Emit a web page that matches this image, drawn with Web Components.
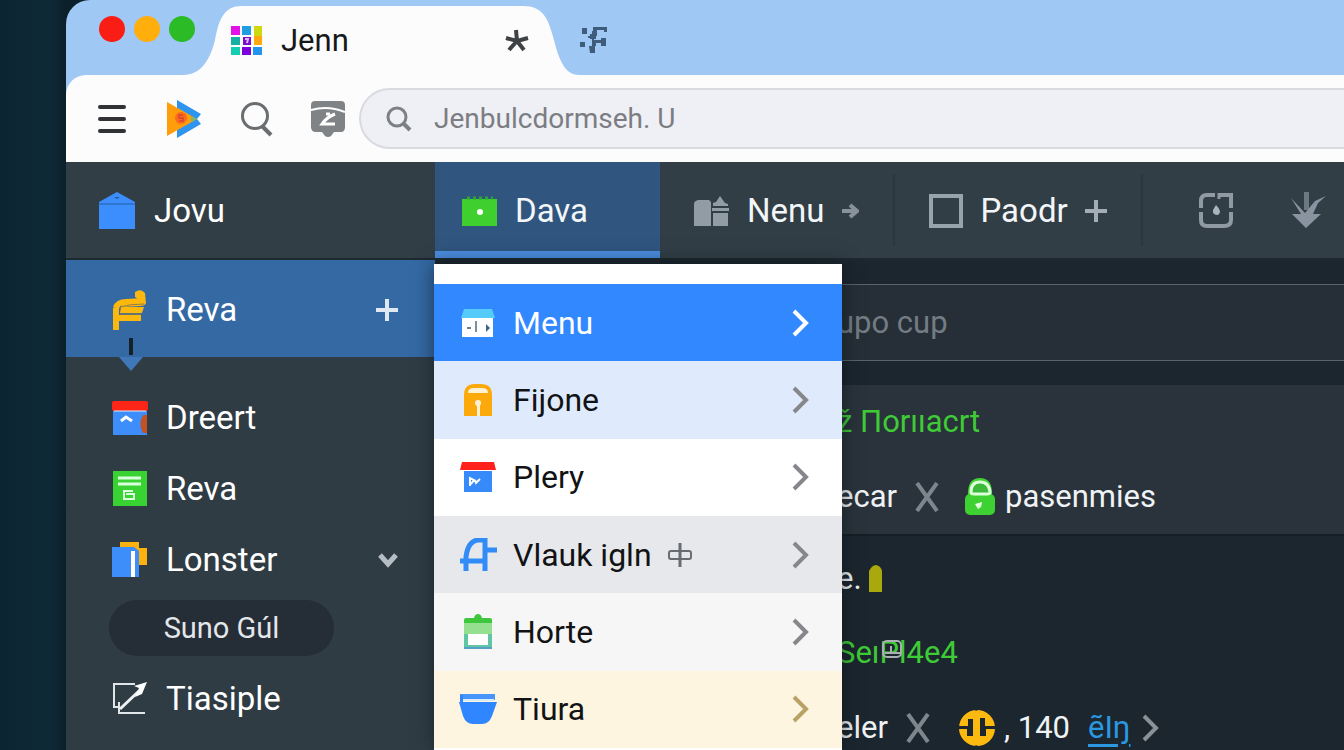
<!DOCTYPE html>
<html lang="en">
<head>
<meta charset="utf-8">
<meta name="viewport" content="width=device-width, initial-scale=1">
<title>Jenn</title>
<style>
body {
    margin: 0;
    overflow: hidden;
    background: linear-gradient(90deg, #0b2531 0, #0e2a36 50px, #0b202b 66px);
    font: 32px/40px Roboto, "Open Sans", sans-serif;
    color: #fff;
}
</style>
</head>
<body>
<browser-window>
    <browser-tab slot="tabs" icon="grid">Jenn</browser-tab>
    <browser-toolbar slot="toolbar"></browser-toolbar>
    <app-layout>
        <app-brand slot="brand">Jovu</app-brand>
        <nav-tab slot="nav" icon="calendar" active>Dava</nav-tab>
        <nav-tab slot="nav" icon="building" extra="arrow">Nenu</nav-tab>
        <nav-tab slot="nav" icon="square" extra="plus">Paodr</nav-tab>
        <nav-action slot="nav" icon="capture" label="Capture"></nav-action>
        <nav-action slot="nav" icon="leaf" label="Download"></nav-action>

        <side-item slot="side" icon="wing" extra="plus" active>Reva</side-item>
        <side-item slot="side" icon="shop">Dreert</side-item>
        <side-item slot="side" icon="note">Reva</side-item>
        <side-item slot="side" icon="folder" extra="down">Lonster</side-item>
        <side-pill slot="side">Suno Gúl</side-pill>
        <side-item slot="side" icon="export">Tiasiple</side-item>

        <popup-menu slot="menu">
            <menu-item icon="store" tone="primary">Menu</menu-item>
            <menu-item icon="gate" tone="light">Fijone</menu-item>
            <menu-item icon="stall">Plery</menu-item>
            <menu-item icon="bridge" tone="grey" extra="join">Vlauk igln</menu-item>
            <menu-item icon="jar" tone="pale">Horte</menu-item>
            <menu-item icon="bowl" tone="cream">Tiura</menu-item>
        </popup-menu>

        <content-search placeholder="upo cup"></content-search>
        <content-panel raised>
            <content-row tone="green">ž &#1055;orııacrt</content-row>
            <content-row>ecar<app-icon name="cross"></app-icon><app-icon name="lock"></app-icon><span>pasenmies</span></content-row>
        </content-panel>
        <content-panel>
            <content-row tight>e.<app-icon name="bullet"></app-icon></content-row>
            <content-row tone="green" badge="chip">SeıPl4e4</content-row>
            <content-row>eler<app-icon name="cross"></app-icon><app-icon name="coin"></app-icon><span>, 140</span><content-link>ẽIŋ</content-link></content-row>
        </content-panel>
    </app-layout>
</browser-window>

<script>
"use strict"
{
    /* width, height, markup */
    const icons = {
        grid: [32, 32, `
            <path fill="#e310e8" d="M0 1h9v9H0z"/><path fill="#1f9fe0" d="M11 1h9v9h-9z"/><path fill="#cfd90f" d="M23 1h8v10h-8z"/>
            <path fill="#15b0a4" d="M0 12h9v8H0z"/><path fill="#7b0fc9" d="M12 12h8v8h-8z"/><path fill="#ffa90f" d="M23 11h8v9h-8z"/>
            <path fill="#13cdb0" d="M0 22h9v8H0z"/><path fill="#7a00dc" d="M11 22h9v8h-9z"/><path fill="#2395ee" d="M22 22h9v8h-9z"/>
            <path fill="none" stroke="#dcb7f4" stroke-width="2" d="M14 14h3l-1 4"/>`],
        star: [24, 24, `<path fill="none" stroke="#3f4245" stroke-width="4" d="M11 1l1 11L1 9m11 3L4 21m8-9 7 9m-7-9 11-3"/>`],
        pixels: [28, 28, `<path fill="#3f5c7a" d="M3 2h5v6H3zM1 16h5v5H1zM14 1h14v5h-3V4h-7v6h-4zM11 8h6v5h-6zM13 14h9v-2h5v8h-5v-3h-5v3h-4zM10 20h6v7h-5z"/><path stroke="#3f5c7a" stroke-width="2" d="M9 11h8M14 5v16"/>`],
        burger: [28, 30, `<path stroke="#303236" stroke-width="4" stroke-linecap="round" d="M2 3h24M2 15h24M2 27h24"/>`],
        play: [36, 40, `<path fill="#2f94ee" d="M11 1l24 14-4 5 4 5-24 14z"/><path fill="#ff9d0b" d="M1 3l30 17L1 37z"/><path fill="#79b96d" d="M25 17l6 3-6 3z"/><circle cx="15" cy="19" r="6" fill="#ff6a1c"/><path fill="none" stroke="#d9502e" stroke-width="2" d="M17 16h-4v3h4v3h-4"/>`],
        search: [34, 36, `<circle cx="16" cy="15" r="12.5" fill="none" stroke="#6b6e71" stroke-width="3"/><path stroke="#6b6e71" stroke-width="4" d="M23 25l9 9"/>`],
        note2: [34, 36, `<path fill="#808386" d="M4 0h26q4 0 4 4v22q0 5-4 5h-7l-3 4q-3 2-6 0l-3-4H5q-5 0-5-5V4q0-4 4-4z"/><path fill="none" stroke="#fff" stroke-width="2" d="M0 9q17-5 34 2"/><path fill="none" stroke="#fff" stroke-width="3" d="M24 13q-8 3-13 10h13M15 13h4"/>`],
        find: [26, 26, `<circle cx="11" cy="11" r="9" fill="none" stroke="#7d8085" stroke-width="3"/><path stroke="#7d8085" stroke-width="4" d="M17 17l7 7"/>`],
        home: [38, 38, `<path fill="#3c8eff" d="M1 10L19 0l18 10v27H1z"/><path stroke="#245c9f" stroke-width="1" d="M1 12h36"/><path fill="#245c9f" d="M16 5h6l-3 2z"/>`],
        calendar: [36, 32, `<path fill="#3fd02f" d="M0 4h35v27H0z"/><path stroke="#2da438" stroke-width="3" stroke-dasharray="3 3" d="M5 3h26"/><circle cx="18" cy="17" r="3" fill="#fff"/>`],
        building: [36, 32, `<path fill="#919ca5" d="M4 5h11l2 2v24H0V9q0-3 4-4zM19 31V18h15v13zM18 16v-3h17v3zM19 11V8l3-1 4-6 5 7 3 1v2z"/>`],
        square: [34, 34, `<path fill="none" stroke="#97a3ad" stroke-width="4" d="M2 2h30v30H2z"/><path fill="#97a3ad" d="M28 32h6v2h-6z"/>`],
        capture: [34, 36, `<path fill="none" stroke="#8f9aa3" stroke-width="4" d="M2 16V9q0-6 6-6h8M19 3h13v13M2 20v8q0 6 6 6h17q7 0 7-6v-8"/><path fill="#a9b4bb" d="M17 13q7 7 2 10-6 0-5-5z"/><path stroke="#8f9aa3" stroke-width="3" d="M20 1v6"/>`],
        leaf: [38, 36, `<path fill="#6d7881" d="M15 0h5v18h-5z"/><path fill="#8994a0" d="M2 6l14 15L26 9l11-5-8 7-5 11h8L17 36 3 22h9z"/>`],
        arrow: [18, 16, `<path fill="none" stroke="#87929b" stroke-width="4" d="M1 8h14M9 2l7 6-7 6"/>`],
        plus: [22, 22, `<path stroke="currentColor" stroke-width="4" d="M0 11h22M11 0v22"/>`],
        down: [20, 16, `<path fill="none" stroke="#b5bec5" stroke-width="5" d="M2 3l8 9 8-9"/>`],
        wing: [38, 42, `<path fill="#fdb80e" d="M24 3q6-4 10 1l1 10q-1 3-6 3l-19 1 1-2q9 0 16-2l3-2-6-4zM2 18q3-8 13-8l19-1-2 6-19 1q-5 0-5 5zM10 18h23l-2 6H9zM8 26h22v6H8v9H2V19h6z"/><path fill="none" stroke="#8f8047" stroke-width="1" d="M9 18q10-3 24-3M9 25h21"/>`],
        shop: [36, 36, `<path fill="#3d8dfa" d="M1 9h34v26H1z"/><path fill="#c25223" d="M35 15v18h-4q-5-9 0-18z"/><rect width="36" height="10" y="1" rx="2" fill="#fb2518"/><path stroke="#e7edf7" stroke-width="1" d="M2 11h32"/><path fill="none" stroke="#fff" stroke-width="3" d="M9 21l5-4 6 4"/>`],
        note: [34, 36, `<path fill="#39d233" d="M0 0h34v35H0z"/><path stroke="#d9ffdc" stroke-width="3" d="M5 7h23M5 13h23"/><path fill="none" stroke="#d9ffdc" stroke-width="2" d="M20 20h-9v8h10v-5H13"/>`],
        folder: [36, 36, `<path fill="#fbb20e" d="M8 0h19v6h8v17h-8l-19-16z"/><path fill="#3d8dfa" d="M0 5h22l5 4v26H0z"/><path fill="#fff" d="M19 9h4v26h-4z"/>`],
        export: [36, 34, `<path fill="none" stroke="#dfe6ea" stroke-width="2" d="M23 2H2v23h5M7 20v11h26"/><path stroke="#eef2f4" stroke-width="3" d="M8 27L27 9"/><path fill="#fff" d="M35 0L22 4l5 2-4 9 7-3z"/>`],
        pointer: [24, 34, `<path stroke="#14202a" stroke-width="4" d="M12 0v17"/><path fill="#3f78b8" d="M0 19h24L12 33z"/>`],
        store: [34, 30, `<path fill="#fff" d="M1 9h31v20H1z"/><path fill="#54cbf8" d="M3 1h28l3 9H0z"/><path stroke="#71828f" stroke-width="2" d="M6 20h4"/><path stroke="#7790a6" stroke-width="2" d="M15 13v11"/><path fill="#3b6486" d="M25 16l4 4-4 4z"/>`],
        gate: [28, 32, `<path fill="#fca90b" d="M0 32V11Q0 0 11 0h6q11 0 11 11v21z"/><path fill="#fff1d6" d="M4 9q0-5 6-5h8q6 0 6 5zM13 19h3v13h-3z"/><circle cx="14" cy="19" r="3" fill="#fff1d6"/>`],
        stall: [36, 32, `<path fill="#368af9" d="M4 10h28v21H4z"/><path fill="#ff211b" d="M2 1h32l2 8H0z"/><path fill="none" stroke="#fff" stroke-width="2" d="M10 25v-8l4 2-3 4m4-4l1 3 4-4"/>`],
        bridge: [38, 34, `<path fill="none" stroke="#318cf8" stroke-width="5" d="M7 33V19Q9 3 19 2h7v31M1 23h27M27 12h11"/>`],
        jar: [30, 36, `<path fill="#5fc5a4" d="M1 14h28v21H1z"/><path fill="#94df90" d="M1 8h28v12H1z"/><path fill="#3ec73d" d="M3 4h8q1-4 4-4t4 4h8q2 0 2 2v3H1V6q0-2 2-2z"/><path fill="#fff" d="M5 20h20v11H5z"/><path stroke="#579fc4" stroke-width="2" d="M1 34h28"/>`],
        bowl: [38, 32, `<path fill="#4595fb" d="M1 1h35v6H1z"/><path fill="#2f86ff" d="M0 9h38l-5 14q-3 8-10 8h-9q-7 0-10-8z"/><path fill="#2f86ff" d="M1 2h3v8H1z"/><path stroke="#d8e9fa" stroke-width="2" d="M4 7h31"/>`],
        join: [24, 24, `<rect x="1" y="8" width="22" height="8" rx="2" fill="none" stroke="#696c70" stroke-width="2"/><path stroke="#696c70" stroke-width="3" d="M12 0v24"/>`],
        chevron: [18, 28, `<path fill="none" stroke="currentColor" stroke-width="4" d="M2 2l12 12L2 26"/>`],
        cross: [24, 30, `<path fill="none" stroke="#7d868d" stroke-width="4" d="M2 1l20 28M22 1L2 29"/>`],
        lock: [30, 38, `<rect y="16" width="30" height="21" rx="5" fill="#3ed132"/><path fill="#3ed132" d="M3 18Q2 0 15 0t12 18z"/><path fill="#3ab93b" stroke="#dcffd9" stroke-width="3" d="M6 14Q6 4 15 4t10 10q0 2-3 2H9q-3 0-3-2z"/><path fill="#e5ffe2" d="M10 26l7-2-1 5-3 2z"/>`],
        bullet: [14, 28, `<path fill="#a9a80c" d="M1 27V6q3-6 7-6 5 1 6 6v21z"/>`],
        chip: [20, 18, `<rect x="1" y="1" width="18" height="16" rx="4" fill="none" stroke="#a9afb3" stroke-width="2"/><path stroke="#a9afb3" stroke-width="2" d="M9 6v6M3 13h15"/>`],
        coin: [38, 38, `<circle cx="19" cy="19" r="18" fill="#fcb90f"/><path fill="#1c262e" d="M0 17h10v-7h5v17H9v-7H0zM22 9h5v8h11v3H28v7h-6zM16 0h5l-3 2zM16 38h5l-3-2z"/>`]
    };

    const define = (name, css, html, setup) => {
        const template = document.createElement('template');
        template.innerHTML = `<style>* { box-sizing: border-box; } button { font: inherit; color: inherit; border: 0; padding: 0; background: none; cursor: pointer; }${css}</style>${html}`;
        customElements.define(name, class extends HTMLElement {
            constructor() {
                super();
                this.attachShadow({ mode: 'open' }).appendChild(template.content.cloneNode(true));
            }
            connectedCallback() {
                const t = this;
                // copy icon and extra attributes to the inner icons
                t.shadowRoot.querySelectorAll('app-icon[from]').forEach(icon => {
                    const value = t.getAttribute(icon.getAttribute('from'));
                    if (value) icon.setAttribute('name', value);
                    else icon.remove();
                });
                if (setup) setup(t, t.shadowRoot);
            }
        });
    };

    class AppIcon extends HTMLElement {
        static get observedAttributes() {
            return ['name'];
        }
        constructor() {
            super();
            this.attachShadow({ mode: 'open' });
        }
        attributeChangedCallback(property, oldValue, newValue) {
            const icon = icons[newValue];
            if (oldValue === newValue || !icon) return;
            this.shadowRoot.innerHTML = `<style>:host { display: inline-flex; flex: none; } svg { display: block; }</style>
<svg width="${icon[0]}" height="${icon[1]}" viewBox="0 0 ${icon[0]} ${icon[1]}" fill="none" aria-hidden="true">${icon[2]}</svg>`;
        }
    }
    customElements.define('app-icon', AppIcon);

    define('browser-window', `
:host { display: flex; flex-direction: column; height: 100vh; margin-left: 66px; overflow: hidden; border-radius: 24px 0 0 0; background: #9fc8f4; }
.strip { display: flex; height: 75px; flex: none; }
.lights { display: flex; gap: 9px; padding: 16px 0 0 33px; }
.lights button { width: 26px; height: 26px; border-radius: 50%; }
.close { background: #fa1d15; }
.min { background: #ffae0b; }
.max { background: #2abb27; }
.new { align-self: center; height: 30px; }
`, `
<div class="strip">
    <div class="lights"><button class="close" aria-label="Close"></button><button class="min" aria-label="Minimize"></button><button class="max" aria-label="Maximize"></button></div>
    <slot name="tabs"></slot>
    <button class="new" aria-label="New tab"><app-icon name="pixels"></app-icon></button>
</div>
<slot name="toolbar"></slot>
<slot></slot>`);

    define('browser-tab', `
:host { display: flex; align-items: center; gap: 18px; position: relative; width: 396px; margin: 6px 0 0 -12px; padding: 0 50px 0 48px; box-sizing: border-box; color: #17181a; font-size: 31px; }
.shape { position: absolute; inset: 0; width: 100%; height: 100%; }
app-icon, span, button { position: relative; }
span { flex: 1; }
button { display: flex; }
`, `
<svg class="shape" viewBox="0 0 396 69" preserveAspectRatio="none" aria-hidden="true"><path fill="#fcfcfd" d="M0 69C18 69 27 54 32 34C36 13 41 0 59 0H340C360 0 365 12 371 34C376 54 382 69 396 69z"/></svg>
<app-icon from="icon"></app-icon><span><slot></slot></span>
<button aria-label="Close tab"><app-icon name="star"></app-icon></button>`);

    define('browser-toolbar', `
:host { display: flex; align-items: center; flex: none; height: 87px; padding-left: 28px; border-radius: 20px 0 0 0; background: #fcfcfd; }
nav { display: flex; gap: 36px; padding-right: 13px; }
nav button { display: flex; justify-content: center; align-items: center; width: 36px; height: 40px; }
label { display: flex; flex: 1; align-items: center; gap: 22px; height: 61px; padding-left: 25px; border: 2px solid #d9dadf; border-right: 0; border-radius: 31px 0 0 31px; background: #eff0f5; }
input { flex: 1; min-width: 0; border: 0; padding: 0; outline: 0; background: none; font: inherit; font-size: 28px; color: #7b7d82; }
`, `
<nav>
    <button aria-label="Menu"><app-icon name="burger"></app-icon></button>
    <button aria-label="Play"><app-icon name="play"></app-icon></button>
    <button aria-label="Search"><app-icon name="search"></app-icon></button>
    <button aria-label="Notes"><app-icon name="note2"></app-icon></button>
</nav>
<label><app-icon name="find"></app-icon><input type="text" aria-label="Address" value="Jenbulcdormseh. U"></label>`);

    define('app-layout', `
:host { display: grid; grid-template-columns: 369px 1fr; grid-template-rows: 98px 1fr; flex: 1; min-height: 0; position: relative; background: #1c262e; }
.brand, .nav { border-bottom: 2px solid #1d2931; background: #323e46; }
.nav { display: flex; }
aside { background: #303c44; }
main { min-width: 0; padding-top: 24px; background: #1c262e; }
.menu { position: absolute; left: 368px; top: 102px; bottom: 0; display: flex; }
`, `
<div class="brand"><slot name="brand"></slot></div>
<div class="nav" role="navigation"><slot name="nav"></slot></div>
<aside><slot name="side"></slot></aside>
<main><slot></slot></main>
<div class="menu"><slot name="menu"></slot></div>`);

    define('app-brand', `
:host { display: flex; align-items: center; gap: 18px; height: 98px; padding-left: 32px; font-size: 33px; }
`, `<app-icon name="home"></app-icon><slot></slot>`);

    define('nav-tab', `
:host { display: flex; border-right: 2px solid #2b363e; margin: 12px 0; color: #f3f6f8; font-size: 33px; }
button { display: flex; align-items: center; gap: 17px; padding: 2px 34px 0; }
app-icon { color: #a3adb5; }
:host([active]) { width: 225px; box-sizing: border-box; margin: 0; border-right: 0; border-bottom: 7px solid #4b8de0; background: #30557e; }
:host([active]) button { padding: 9px 27px 0; }
`, `<button><app-icon from="icon"></app-icon><slot></slot><app-icon from="extra"></app-icon></button>`);

    define('nav-action', `
:host { display: flex; align-items: center; margin-left: 56px; }
button { display: flex; }
`, `<button><app-icon from="icon"></app-icon></button>`, (t, root) => {
        root.querySelector('button').setAttribute('aria-label', t.getAttribute('label'));
    });

    define('side-item', `
:host { display: block; position: relative; font-size: 33px; }
button { display: grid; grid-template-columns: 42px 1fr auto; align-items: center; column-gap: 15px; width: 100%; height: 71px; padding: 2px 37px 0 43px; text-align: left; }
app-icon { justify-content: center; }
:host([active]) { margin-bottom: 24px; background: #3469a4; }
:host([active]) button { height: 97px; }
.plus { color: #dfe9f4; }
.pointer { display: none; position: absolute; left: 53px; top: 78px; }
:host([active]) .pointer { display: block; }
`, `<button><app-icon from="icon"></app-icon><span><slot></slot></span><app-icon class="plus" from="extra"></app-icon></button><app-icon class="pointer" name="pointer"></app-icon>`);

    define('side-pill', `
:host { display: block; padding: 6px 0 6px 43px; font-size: 29px; }
button { width: 225px; height: 56px; border-radius: 28px; background: #252d37; color: #e3e7ea; }
`, `<button><slot></slot></button>`);

    define('popup-menu', `
:host { display: flex; flex-direction: column; width: 408px; padding: 20px 0 2px; box-sizing: border-box; background: #fff; box-shadow: 0 0 18px rgba(10, 18, 24, .6); color: #121314; }
`, `<slot></slot>`, t => t.setAttribute('role', 'menu'));

    define('menu-item', `
:host { display: flex; flex: 1 0 76px; --chevron: #85878a; }
:host([tone="primary"]) { background: #3288ff; color: #fff; --chevron: #fff; }
:host([tone="light"]) { background: #dfebfd; }
:host([tone="grey"]) { background: #e7e8ec; }
:host([tone="pale"]) { background: #f6f6f6; }
:host([tone="cream"]) { background: #fef5e1; --chevron: #b8a265; }
button { display: grid; grid-template-columns: 38px auto auto 1fr; align-items: center; column-gap: 16px; width: 100%; padding: 0 32px 0 25px; text-align: left; }
app-icon { justify-content: center; }
.chevron { grid-column: 4; justify-content: flex-end; color: var(--chevron); }
`, `<button role="menuitem"><app-icon from="icon"></app-icon><span><slot></slot></span><app-icon from="extra"></app-icon><app-icon class="chevron" name="chevron"></app-icon></button>`);

    define('content-search', `
:host { display: block; margin-bottom: 24px; }
input { display: block; width: 100%; height: 77px; padding: 0 0 0 402px; border: solid #58636a; border-width: 1px 0; border-radius: 0; outline: 0; background: #262f37; font: inherit; font-size: 31px; }
input::placeholder { color: #747c83; opacity: 1; }
`, `<input type="search" aria-label="Search">`, (t, root) => {
        root.querySelector('input').placeholder = t.getAttribute('placeholder');
    });

    define('content-panel', `
:host { display: block; padding-top: 5px; }
:host([raised]) { padding: 0; border-bottom: 2px solid #151e25; background: #2a333b; }
`, `<slot></slot>`);

    define('content-row', `
:host { display: flex; align-items: center; gap: 18px; position: relative; height: 75px; padding-left: 402px; font-size: 31px; color: #f0f3f5; white-space: pre; }
:host([tone="green"]) { height: 74px; color: #3fcb36; }
:host([tight]) { gap: 6px; }
::slotted(app-icon[name="lock"]) { margin: 0 -8px 0 8px; }
::slotted(app-icon[name="coin"]) { margin: 0 -10px 0 10px; }
.badge { position: absolute; left: 447px; top: 24px; }
`, `<slot></slot><app-icon class="badge" from="badge"></app-icon>`);

    define('content-link', `
:host { display: flex; }
a { display: flex; align-items: center; gap: 12px; color: #2b98e2; text-underline-offset: 6px; }
app-icon { color: #8a9298; }
`, `<a href="#"><slot></slot><app-icon name="chevron"></app-icon></a>`);
}
</script>
</body>
</html>
